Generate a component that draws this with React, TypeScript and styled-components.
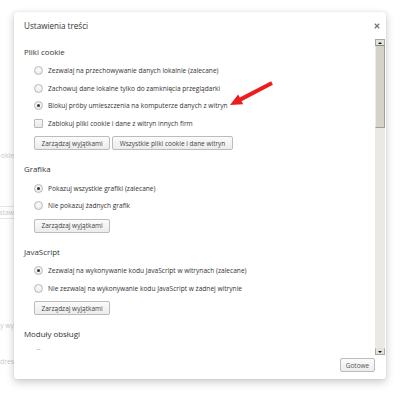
import React from 'react';
import styled, { createGlobalStyle } from 'styled-components';

const Global = createGlobalStyle`
  html, body { margin: 0; padding: 0; background: #fff; }
  body { font-family: "Open Sans", "Noto Sans", sans-serif; -webkit-font-smoothing: antialiased; }
  * { box-sizing: border-box; }
`;

const Page = styled.div`
  position: relative;
  width: 400px;
  height: 395px;
  overflow: hidden;
  background: #fff;
`;

const BgPage = styled.div`
  display: flex;
  flex-direction: column;
  align-items: flex-end;
  padding-top: 149px;
  width: 14px;
  overflow: hidden;
`;

const BgRow = styled.div<{ $mt: number; $boxed?: boolean }>`
  margin-top: ${(p) => p.$mt}px;
  height: 13px;
  line-height: 11px;
  font-size: 6.8px;
  color: #c9c9c9;
  white-space: nowrap;
  padding: 0 0 0 1px;
  width: max-content;
  border: 1px solid ${(p) => (p.$boxed ? '#e6e6e6' : 'transparent')};
  border-right: none;
`;

const Dialog = styled.div`
  position: absolute;
  left: 14px;
  top: 12px;
  width: 372px;
  height: 367px;
  background: #fff;
  border-radius: 2px;
  box-shadow: 0 3px 8px rgba(0, 0, 0, 0.22), 0 0 1px rgba(0, 0, 0, 0.25);
  display: flex;
  flex-direction: column;
`;

const Header = styled.div`
  height: 27px;
  display: flex;
  align-items: center;
  justify-content: space-between;
  padding: 0 6px 0 10px;
`;

const Title = styled.div`
  font-size: 8.1px;
  color: #333;
`;

const Body = styled.div`
  flex: 1;
  display: flex;
  min-height: 0;
`;

const Content = styled.div`
  flex: 1;
  overflow: hidden;
  margin-bottom: 5px;
  padding: 5.5px 0 0 10px;
`;

const Section = styled.div`
  margin-bottom: 12px;
`;

const Heading = styled.div`
  height: 14px;
  line-height: 14px;
  font-size: 7.9px;
  color: #333;
`;

const Options = styled.div`
  margin-top: 3.25px;
  display: flex;
  flex-direction: column;
`;

const OptionRow = styled.div`
  height: 17.5px;
  display: flex;
  align-items: center;
  gap: 5px;
  padding-left: 10px;
  font-size: 6.6px;
  color: #333;
  white-space: nowrap;
`;

const Radio = styled.span<{ $checked?: boolean }>`
  width: 9px;
  height: 9px;
  border-radius: 50%;
  border: 1px solid #b9b9b9;
  background: radial-gradient(circle at 50% 35%, #fdfdfd 0%, #ececec 70%, #e0e0e0 100%);
  display: flex;
  align-items: center;
  justify-content: center;
  flex-shrink: 0;
  &::after {
    content: '';
    width: 3px;
    height: 3px;
    border-radius: 50%;
    background: ${(p) => (p.$checked ? '#333' : 'transparent')};
  }
`;

const Checkbox = styled.span`
  width: 9px;
  height: 9px;
  border-radius: 1px;
  border: 1px solid #b9b9b9;
  background: linear-gradient(#f7f7f7, #e8e8e8);
  flex-shrink: 0;
`;

const ButtonRow = styled.div`
  margin-top: 4.25px;
  padding-left: 10px;
  display: flex;
  gap: 2px;
`;

const Button = styled.div`
  height: 14px;
  padding: 0 6.5px;
  display: flex;
  align-items: center;
  justify-content: center;
  font-size: 6.5px;
  color: #444;
  border: 1px solid #bcbcbc;
  border-radius: 2px;
  background: linear-gradient(#fbfbfb, #ececec);
  white-space: nowrap;
`;

const ScrollBar = styled.div`
  width: 10px;
  margin-right: 1px;
  display: flex;
  flex-direction: column;
  background: #ebe9e4;
`;

const ScrollButton = styled.div<{ $down?: boolean }>`
  height: 7px;
  display: flex;
  align-items: center;
  justify-content: center;
  background: #e4e2dc;
  border: 1px solid #a8a7a3;
  ${(p) => (p.$down ? 'border-top-color:#e4e2dc;' : 'border-bottom-color:#8e8d8a;')}
  &::after {
    content: '';
    width: 0;
    height: 0;
    border-left: 2.5px solid transparent;
    border-right: 2.5px solid transparent;
    ${(p) => (p.$down ? 'border-top: 2.5px solid #111;' : 'border-bottom: 2.5px solid #111;')}
  }
`;

const Thumb = styled.div`
  height: 82px;
  background: #d5d2ca;
  border-right: 1px solid #a29f99;
  border-bottom: 1px solid #a29f99;
  border-left: 1px solid #ecebe7;
`;

const Track = styled.div`
  flex: 1;
  background: #ebe9e4;
`;

const Footer = styled.div`
  height: 24px;
  display: flex;
  justify-content: flex-end;
  align-items: flex-start;
  padding: 3px 11px 0 0;
`;

const DoneButton = styled(Button)`
  width: 35px;
  padding: 0;
  color: #555;
`;

const Arrow = styled.svg`
  position: absolute;
  left: 228px;
  top: 78px;
`;

type Opt = { label: string; kind: 'radio' | 'check'; checked?: boolean };

const sections: { title: string; options: Opt[]; buttons: string[] }[] = [
  {
    title: 'Pliki cookie',
    options: [
      { label: 'Zezwalaj na przechowywanie danych lokalnie (zalecane)', kind: 'radio' },
      { label: 'Zachowuj dane lokalne tylko do zamknięcia przeglądarki', kind: 'radio' },
      { label: 'Blokuj próby umieszczenia na komputerze danych z witryn', kind: 'radio', checked: true },
      { label: 'Zablokuj pliki cookie i dane z witryn innych firm', kind: 'check' },
    ],
    buttons: ['Zarządzaj wyjątkami', 'Wszystkie pliki cookie i dane witryn'],
  },
  {
    title: 'Grafika',
    options: [
      { label: 'Pokazuj wszystkie grafiki (zalecane)', kind: 'radio', checked: true },
      { label: 'Nie pokazuj żadnych grafik', kind: 'radio' },
    ],
    buttons: ['Zarządzaj wyjątkami'],
  },
  {
    title: 'JavaScript',
    options: [
      { label: 'Zezwalaj na wykonywanie kodu JavaScript w witrynach (zalecane)', kind: 'radio', checked: true },
      { label: 'Nie zezwalaj na wykonywanie kodu JavaScript w żadnej witrynie', kind: 'radio' },
    ],
    buttons: ['Zarządzaj wyjątkami'],
  },
  {
    title: 'Moduły obsługi',
    options: [
      { label: 'Zezwalaj witrynom na żądanie obsługi protokołów', kind: 'radio' },
    ],
    buttons: [],
  },
];

export default function App() {
  return (
    <Page>
      <Global />
      <BgPage>
        <BgRow $mt={0}>okie</BgRow>
        <BgRow $mt={44} $boxed>staw</BgRow>
        <BgRow $mt={100}>y wy</BgRow>
        <BgRow $mt={23}>dres</BgRow>
      </BgPage>
      <Dialog>
        <Header>
          <Title>Ustawienia treści</Title>
          <svg width="6" height="6" viewBox="0 0 6 6">
            <path d="M0.8 0.8 L5.2 5.2 M5.2 0.8 L0.8 5.2" stroke="#777" strokeWidth="1.3" />
          </svg>
        </Header>
        <Body>
          <Content>
            {sections.map((s) => (
              <Section key={s.title}>
                <Heading>{s.title}</Heading>
                <Options>
                  {s.options.map((o) => (
                    <OptionRow key={o.label}>
                      {o.kind === 'radio' ? <Radio $checked={o.checked} /> : <Checkbox />}
                      {o.label}
                    </OptionRow>
                  ))}
                </Options>
                {s.buttons.length > 0 && (
                  <ButtonRow>
                    {s.buttons.map((b) => (
                      <Button key={b}>{b}</Button>
                    ))}
                  </ButtonRow>
                )}
              </Section>
            ))}
          </Content>
          <ScrollBar>
            <ScrollButton />
            <Thumb />
            <Track />
            <ScrollButton $down />
          </ScrollBar>
        </Body>
        <Footer>
          <DoneButton>Gotowe</DoneButton>
        </Footer>
      </Dialog>
      <Arrow width="48" height="30" viewBox="0 0 48 30">
        <polygon
          points="2,27 15.2,26.3 13.5,23.2 44.9,6.8 43.1,3.2 11.7,19.6 10.1,16.5"
          fill="#ee1c1c"
        />
      </Arrow>
    </Page>
  );
}
